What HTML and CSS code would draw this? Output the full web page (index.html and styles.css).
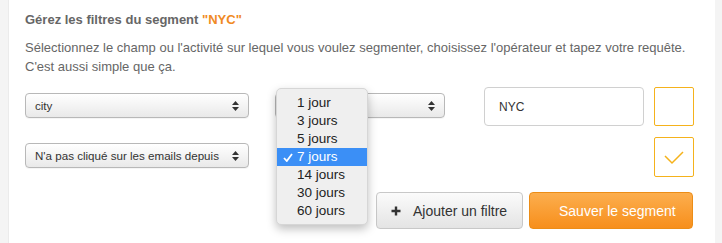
FILE: index.html
```html
<!DOCTYPE html>
<html lang="fr">
<head>
<meta charset="utf-8">
<title>Segment</title>
<link rel="stylesheet" href="styles.css">
</head>
<body>
<div class="panel">
  <h2 class="title">Gérez les filtres du segment <span class="hl">"NYC"</span></h2>
  <p class="intro">Sélectionnez le champ ou l'activité sur lequel vous voulez segmenter, choisissez l'opérateur et tapez votre requête.<br>C'est aussi simple que ça.</p>

  <div class="filters">
    <div class="cell">
      <div class="select"><span>city</span><svg class="arrows" width="7" height="10" viewBox="0 0 7 10"><path d="M3.5 0 L7 4 L0 4 Z M0 6 L7 6 L3.5 10 Z" fill="#333"/></svg></div>
    </div>
    <div class="cell col2">
      <div class="select"><span></span><svg class="arrows" width="7" height="10" viewBox="0 0 7 10"><path d="M3.5 0 L7 4 L0 4 Z M0 6 L7 6 L3.5 10 Z" fill="#333"/></svg></div>
      <ul class="menu">
        <li>1 jour</li>
        <li>3 jours</li>
        <li>5 jours</li>
        <li class="sel"><svg class="tick" width="10" height="9" viewBox="0 0 10 9"><path d="M1 5 L3.8 8 L9 1" fill="none" stroke="#fff" stroke-width="1.8"/></svg>7 jours</li>
        <li>14 jours</li>
        <li>30 jours</li>
        <li>60 jours</li>
      </ul>
    </div>
    <div class="cell col3">
      <div class="input">NYC</div>
    </div>
    <div class="cell col4">
      <div class="box"></div>
    </div>

    <div class="cell">
      <div class="select"><span>N'a pas cliqué sur les emails depuis</span><svg class="arrows" width="7" height="10" viewBox="0 0 7 10"><path d="M3.5 0 L7 4 L0 4 Z M0 6 L7 6 L3.5 10 Z" fill="#333"/></svg></div>
    </div>
    <div class="cell col2"></div>
    <div class="cell col3"></div>
    <div class="cell col4">
      <div class="box tall"><svg width="40" height="40" viewBox="0 0 40 40"><path d="M11 19 L18 26 L29 15" fill="none" stroke="#f5b21b" stroke-width="1.5"/></svg></div>
    </div>

    <div class="actions">
      <button class="btn add"><svg class="plus" width="10" height="10" viewBox="0 0 10 10"><path d="M5 0.5 V9.5 M0.5 5 H9.5" stroke="#333" stroke-width="2.4"/></svg>Ajouter un filtre</button>
      <button class="btn save">Sauver le segment</button>
    </div>
  </div>
</div>
</body>
</html>
```

FILE: styles.css
```css
* { box-sizing: border-box; }
html, body { margin: 0; padding: 0; }
body {
  background: #f4f4f4;
  font-family: "Liberation Sans", Arial, sans-serif;
  color: #666;
  height: 243px;
  overflow: hidden;
}
.panel {
  margin-left: 8px;
  width: 707px;
  height: 243px;
  background: #fff;
  border-left: 1px solid #ebebeb;
  padding: 12px 0 0 16px;
}
.title {
  margin: 0;
  font-size: 13px;
  line-height: 16px;
  font-weight: bold;
  color: #666;
}
.hl { color: #f08a24; }
.intro {
  margin: 10px 0 0;
  font-size: 13px;
  line-height: 19px;
  color: #666;
}
.filters {
  margin-top: 11px;
  display: grid;
  grid-template-columns: 224px 196px 199px 50px;
  grid-template-rows: 39px 40px 37px;
  column-gap: 0;
  row-gap: 11px;
}
.cell { position: relative; }
.col2 { padding-left: 26px; }
.col3 { padding-left: 39px; }
.col4 { padding-left: 10px; }
.select {
  margin-top: 6px;
  height: 25px;
  border: 1px solid #b8b8b8;
  border-radius: 4px;
  background: linear-gradient(#ffffff, #e9e9e9);
  display: flex;
  align-items: center;
  justify-content: space-between;
  padding: 0 9px 0 9px;
  font-size: 11.6px;
  color: #333;
  box-shadow: 0 1px 0 rgba(0,0,0,0.04);
  white-space: nowrap;
}
.arrows { flex: none; }
.input {
  height: 39px;
  border: 1px solid #d0d0d0;
  border-radius: 4px;
  background: #fff;
  font-size: 12px;
  color: #333;
  display: flex;
  align-items: center;
  padding-left: 14px;
}
.box {
  width: 40px;
  height: 39px;
  border: 1px solid #f5b21b;
  border-radius: 2px;
  background: #fff;
  position: relative;
}
.box.tall { height: 40px; }
.box svg { position: absolute; left: -1px; top: -1px; }
.menu {
  position: absolute;
  left: 27px;
  top: 1px;
  width: 92px;
  margin: 0;
  padding: 5px 0 4px;
  list-style: none;
  background: #efefef;
  border: 1px solid #d6d6d6;
  border-radius: 5px;
  box-shadow: 0 4px 10px rgba(0,0,0,0.25);
  z-index: 5;
}
.menu li {
  height: 18px;
  line-height: 18px;
  font-size: 13.5px;
  color: #222;
  padding-left: 20px;
  position: relative;
}
.menu li.sel { background: #3b8ff6; color: #fff; }
.tick { position: absolute; left: 6px; top: 5px; }
.actions {
  grid-column: 1 / -1;
  display: flex;
  justify-content: flex-end;
  gap: 6px;
  padding-right: 1px;
  margin-top: 4px;
}
.btn {
  height: 37px;
  border-radius: 4px;
  font-family: "Liberation Sans", Arial, sans-serif;
  font-size: 14px;
  display: flex;
  align-items: center;
  cursor: pointer;
}
.add {
  width: 147px;
  padding: 0 0 0 14px;
  border: 1px solid #c8c8c8;
  background: linear-gradient(#fbfbfb, #e4e4e4);
  color: #333;
}
.plus { margin-right: 12px; }
.save {
  width: 164px;
  padding: 0 0 0 29px;
  border: 1px solid #ec8d17;
  background: linear-gradient(#fcae4e, #f78f1c);
  color: #fff;
}
```
